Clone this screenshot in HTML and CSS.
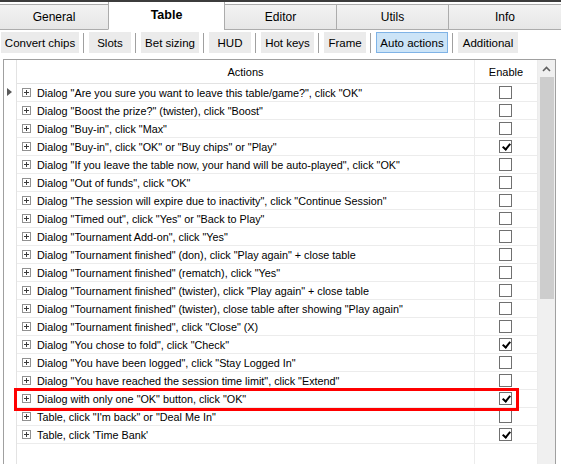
FILE: index.html
```html
<!DOCTYPE html>
<html>
<head>
<meta charset="utf-8">
<link rel="stylesheet" href="styles.css">
</head>
<body>
<div class="topbar"></div>
<div class="tabs">
  <div class="tab w-general">General</div>
  <div class="tab tab-active w-table">Table</div>
  <div class="tab w-editor">Editor</div>
  <div class="tab w-utils">Utils</div>
  <div class="tab w-info">Info</div>
</div>
<div class="toolbar">
  <div class="btn b-cc">Convert chips</div><div class="sep"></div>
  <div class="btn b-slots">Slots</div><div class="sep"></div>
  <div class="btn b-bs">Bet sizing</div><div class="sep"></div>
  <div class="btn b-hud">HUD</div><div class="sep"></div>
  <div class="btn b-hk">Hot keys</div><div class="sep"></div>
  <div class="btn b-frame">Frame</div><div class="sep"></div>
  <div class="btn btn-active b-aa">Auto actions</div><div class="sep"></div>
  <div class="btn b-add">Additional</div>
</div>
<div class="grid">
  <div class="data">
    <div class="row header">
      <div class="c-rh"></div>
      <div class="c-act hcenter">Actions</div>
      <div class="c-en hcenter">Enable</div>
    </div>
    <div class="row"><div class="c-rh"><span class="arrow"></span></div><div class="c-act"><span class="plus"></span>Dialog "Are you sure you want to leave this table/game?", click "OK"</div><div class="c-en"><span class="cb"></span></div></div>
    <div class="row"><div class="c-rh"></div><div class="c-act"><span class="plus"></span>Dialog "Boost the prize?" (twister), click "Boost"</div><div class="c-en"><span class="cb"></span></div></div>
    <div class="row"><div class="c-rh"></div><div class="c-act"><span class="plus"></span>Dialog "Buy-in", click "Max"</div><div class="c-en"><span class="cb"></span></div></div>
    <div class="row"><div class="c-rh"></div><div class="c-act"><span class="plus"></span>Dialog "Buy-in", click "OK" or "Buy chips" or "Play"</div><div class="c-en"><span class="cb checked"></span></div></div>
    <div class="row"><div class="c-rh"></div><div class="c-act"><span class="plus"></span>Dialog "If you leave the table now, your hand will be auto-played", click "OK"</div><div class="c-en"><span class="cb"></span></div></div>
    <div class="row"><div class="c-rh"></div><div class="c-act"><span class="plus"></span>Dialog "Out of funds", click "OK"</div><div class="c-en"><span class="cb"></span></div></div>
    <div class="row"><div class="c-rh"></div><div class="c-act"><span class="plus"></span>Dialog "The session will expire due to inactivity", click "Continue Session"</div><div class="c-en"><span class="cb"></span></div></div>
    <div class="row"><div class="c-rh"></div><div class="c-act"><span class="plus"></span>Dialog "Timed out", click "Yes" or "Back to Play"</div><div class="c-en"><span class="cb"></span></div></div>
    <div class="row"><div class="c-rh"></div><div class="c-act"><span class="plus"></span>Dialog "Tournament Add-on", click "Yes"</div><div class="c-en"><span class="cb"></span></div></div>
    <div class="row"><div class="c-rh"></div><div class="c-act"><span class="plus"></span>Dialog "Tournament finished" (don), click "Play again" + close table</div><div class="c-en"><span class="cb"></span></div></div>
    <div class="row"><div class="c-rh"></div><div class="c-act"><span class="plus"></span>Dialog "Tournament finished" (rematch), click "Yes"</div><div class="c-en"><span class="cb"></span></div></div>
    <div class="row"><div class="c-rh"></div><div class="c-act"><span class="plus"></span>Dialog "Tournament finished" (twister), click "Play again" + close table</div><div class="c-en"><span class="cb"></span></div></div>
    <div class="row"><div class="c-rh"></div><div class="c-act"><span class="plus"></span>Dialog "Tournament finished" (twister), close table after showing "Play again"</div><div class="c-en"><span class="cb"></span></div></div>
    <div class="row"><div class="c-rh"></div><div class="c-act"><span class="plus"></span>Dialog "Tournament finished", click "Close" (X)</div><div class="c-en"><span class="cb"></span></div></div>
    <div class="row"><div class="c-rh"></div><div class="c-act"><span class="plus"></span>Dialog "You chose to fold", click "Check"</div><div class="c-en"><span class="cb checked"></span></div></div>
    <div class="row"><div class="c-rh"></div><div class="c-act"><span class="plus"></span>Dialog "You have been logged", click "Stay Logged In"</div><div class="c-en"><span class="cb"></span></div></div>
    <div class="row"><div class="c-rh"></div><div class="c-act"><span class="plus"></span>Dialog "You have reached the session time limit", click "Extend"</div><div class="c-en"><span class="cb"></span></div></div>
    <div class="row"><div class="c-rh"></div><div class="c-act"><span class="plus"></span>Dialog with only one "OK" button, click "OK"</div><div class="c-en"><span class="cb checked"></span></div></div>
    <div class="row"><div class="c-rh"></div><div class="c-act"><span class="plus"></span>Table, click "I'm back" or "Deal Me In"</div><div class="c-en"><span class="cb"></span></div></div>
    <div class="row"><div class="c-rh"></div><div class="c-act"><span class="plus"></span>Table, click 'Time Bank'</div><div class="c-en"><span class="cb checked"></span></div></div>
    <div class="row filler"><div class="c-rh"></div><div class="c-act"></div><div class="c-en"></div></div>
  </div>
  <div class="scrollbar">
    <div class="sb-up"><svg width="9" height="6" viewBox="0 0 9 6"><path d="M1 5 L4.5 1.5 L8 5" fill="none" stroke="#606060" stroke-width="1.6"/></svg></div>
    <div class="sb-thumb"></div>
  </div>
</div>
<div class="highlight"></div>
</body>
</html>
```
FILE: styles.css
```css
html, body {
  margin: 0;
  padding: 0;
  background: #fff;
  overflow: hidden;
}
body {
  position: relative;
  width: 561px;
  height: 464px;
  font-family: "Liberation Sans", Arial, sans-serif;
  font-size: 10.8px;
  color: #000;
}
.topbar {
  height: 2px;
  background: #3c3c3c;
}
.tabs {
  display: flex;
  align-items: flex-end;
  height: 28px;
}
.tab {
  box-sizing: border-box;
  height: 26px;
  border: 1px solid #acacac;
  margin-left: -1px;
  background: linear-gradient(#f2f2f2, #e6e6e6);
  display: flex;
  align-items: center;
  justify-content: center;
  font-size: 12px;
}
.tab:first-child { margin-left: 0; border-left: none; }
.tab-active {
  height: 28px;
  background: #fff;
  border-top: none;
  border-bottom-color: #fff;
  font-weight: bold;
  font-size: 12.5px;
  padding-bottom: 2px;
}
.w-general { width: 109px; }
.w-table { width: 117px; }
.w-editor { width: 113px; }
.w-utils { width: 113px; }
.w-info { flex: 1; border-right: none; }

.toolbar {
  display: flex;
  align-items: center;
  padding: 2px 0 0 1px;
  height: 21px;
}
.btn {
  box-sizing: border-box;
  height: 21px;
  background: #ebebeb;
  display: flex;
  align-items: center;
  justify-content: center;
  font-size: 11.5px;
  border: 1px solid #ebebeb;
}
.btn-active {
  background: #cce4f7;
  border-color: #7fb3e6;
}
.sep {
  width: 1px;
  height: 20px;
  background: #a0a0a0;
  margin: 0 5px 0 4px;
}
.b-cc { width: 78px; }
.b-slots { width: 42px; }
.b-bs { width: 58px; }
.b-hud { width: 42px; }
.b-hk { width: 53px; }
.b-frame { width: 42px; }
.b-aa { width: 72px; }
.b-add { width: 60px; }

.grid {
  box-sizing: border-box;
  margin: 6px 0 0 3px;
  width: 553px;
  height: 410px;
  border: 1px solid #a0a0a0;
  border-bottom: none;
  display: flex;
}
.data {
  width: 534px;
  display: flex;
  flex-direction: column;
}
.row {
  display: flex;
  height: 18px;
  box-sizing: border-box;
}
.row.header { height: 24px; font-size: 11px; }
.row.filler { flex: 1; height: auto; }
.c-rh {
  width: 12px;
  border-right: 1px solid #e3e3e3;
  position: relative;
}
.c-act {
  box-sizing: border-box;
  width: 458px;
  border-right: 1px solid #ececec;
  border-bottom: 1px solid #ececec;
  display: flex;
  align-items: center;
  padding-left: 5px;
  white-space: nowrap;
  overflow: hidden;
}
.c-en {
  flex: 1;
  border-right: 1px solid #ececec;
  border-bottom: 1px solid #ececec;
  display: flex;
  align-items: center;
  justify-content: center;
}
.row.header .c-act, .row.header .c-en { border-bottom-color: #e3e3e3; }
.row.filler .c-act, .row.filler .c-en { border-bottom: none; }
.hcenter {
  justify-content: center;
  padding-left: 0;
}
.arrow {
  position: absolute;
  left: 3px;
  top: 4px;
  width: 0;
  height: 0;
  border-top: 4.5px solid transparent;
  border-bottom: 4.5px solid transparent;
  border-left: 5px solid #5a5a5a;
}
.plus {
  box-sizing: border-box;
  width: 9px;
  height: 9px;
  border: 1px solid #919191;
  margin-right: 6px;
  position: relative;
  flex: none;
}
.plus::before {
  content: "";
  position: absolute;
  left: 1px;
  top: 3px;
  width: 5px;
  height: 1px;
  background: #3c3c3c;
}
.plus::after {
  content: "";
  position: absolute;
  left: 3px;
  top: 1px;
  width: 1px;
  height: 5px;
  background: #3c3c3c;
}
.cb {
  box-sizing: border-box;
  width: 13px;
  height: 13px;
  border: 1px solid #707070;
  background: #fff;
  position: relative;
  margin-left: -1px;
}
.cb.checked::after {
  content: "";
  position: absolute;
  left: 3.5px;
  top: 1px;
  width: 3px;
  height: 6px;
  border-right: 2px solid #000;
  border-bottom: 2px solid #000;
  transform: rotate(40deg);
}
.scrollbar {
  width: 17px;
  background: #f0f0f0;
  display: flex;
  flex-direction: column;
  align-items: center;
}
.sb-up {
  height: 17px;
  width: 17px;
  display: flex;
  align-items: center;
  justify-content: center;
}
.sb-thumb {
  width: 14px;
  height: 222px;
  background: #cdcdcd;
}
.highlight {
  position: absolute;
  left: 14px;
  top: 388px;
  width: 505px;
  height: 23px;
  box-sizing: border-box;
  border: 3px solid #ff0000;
}
```
